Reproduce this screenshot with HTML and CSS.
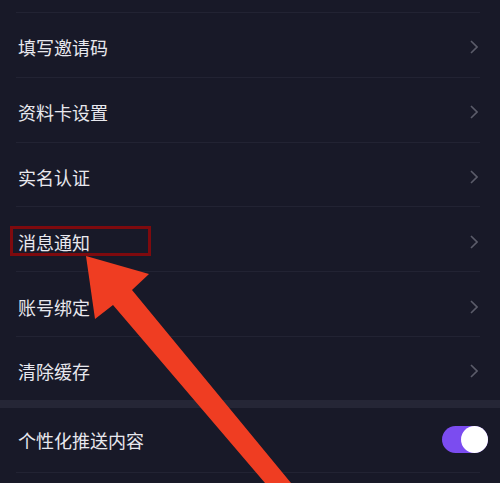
FILE: index.html
```html
<!DOCTYPE html>
<html lang="zh-CN">
<head>
<meta charset="utf-8">
<title>设置</title>
<link rel="stylesheet" href="styles.css">
</head>
<body>
<div class="page">
  <div class="top-spacer"></div>
  <div class="group">
    <div class="row"><span class="label">填写邀请码</span><svg class="chev" viewBox="0 0 8 14"><polyline points="1,1 7,7 1,13"/></svg></div>
    <div class="row"><span class="label">资料卡设置</span><svg class="chev" viewBox="0 0 8 14"><polyline points="1,1 7,7 1,13"/></svg></div>
    <div class="row"><span class="label">实名认证</span><svg class="chev" viewBox="0 0 8 14"><polyline points="1,1 7,7 1,13"/></svg></div>
    <div class="row"><span class="label">消息通知</span><svg class="chev" viewBox="0 0 8 14"><polyline points="1,1 7,7 1,13"/></svg></div>
    <div class="row"><span class="label">账号绑定</span><svg class="chev" viewBox="0 0 8 14"><polyline points="1,1 7,7 1,13"/></svg></div>
    <div class="row last"><span class="label">清除缓存</span><svg class="chev" viewBox="0 0 8 14"><polyline points="1,1 7,7 1,13"/></svg></div>
  </div>
  <div class="band"></div>
  <div class="group">
    <div class="row toggle-row"><span class="label">个性化推送内容</span><span class="switch"><span class="knob"></span></span></div>
  </div>

  <div class="highlight"></div>
  <svg class="arrow" viewBox="0 0 500 483" width="500" height="483">
    <polygon points="86,256 149,274 132,290 291,483 265,483 113,305 95,319"/>
  </svg>
</div>
</body>
</html>
```

FILE: styles.css
```css
html, body {
  margin: 0;
  padding: 0;
  background: #181928;
}
.page {
  position: relative;
  width: 500px;
  height: 483px;
  overflow: hidden;
  background: #181928;
  font-family: "Noto Sans CJK SC", "Noto Sans", sans-serif;
}
.top-spacer {
  height: 12px;
  margin-left: 16px;
  margin-right: 20px;
  border-bottom: 1px solid #222333;
}
.group {
  display: flex;
  flex-direction: column;
}
.row {
  height: 64.8px;
  padding-top: 5px;
  box-sizing: border-box;
  margin-left: 16px;
  margin-right: 20px;
  display: flex;
  align-items: center;
  justify-content: space-between;
  border-bottom: 1px solid #222333;
}
.row.last {
  border-bottom: none;
  height: 63px;
}
.label {
  padding-left: 2px;
  font-size: 18px;
  color: #e8e8ee;
}
.chev {
  width: 8px;
  height: 14px;
  margin-right: 2px;
  fill: none;
  stroke: #5b5c6a;
  stroke-width: 1.6;
}
.band {
  height: 8px;
  background: #252636;
}
.toggle-row {
  padding-top: 0;
  height: 65px;
}
.switch {
  width: 46px;
  height: 27px;
  border-radius: 14px;
  background: #7b4cf0;
  margin-right: -8px;
  display: flex;
  align-items: center;
  justify-content: flex-end;
}
.knob {
  width: 27px;
  height: 27px;
  border-radius: 50%;
  background: #ffffff;
}
.highlight {
  position: absolute;
  left: 10px;
  top: 226px;
  width: 135px;
  height: 24px;
  border: 3px solid #7e0a0e;
}
.arrow {
  position: absolute;
  left: 0;
  top: 0;
  fill: #ef3d22;
}
```
